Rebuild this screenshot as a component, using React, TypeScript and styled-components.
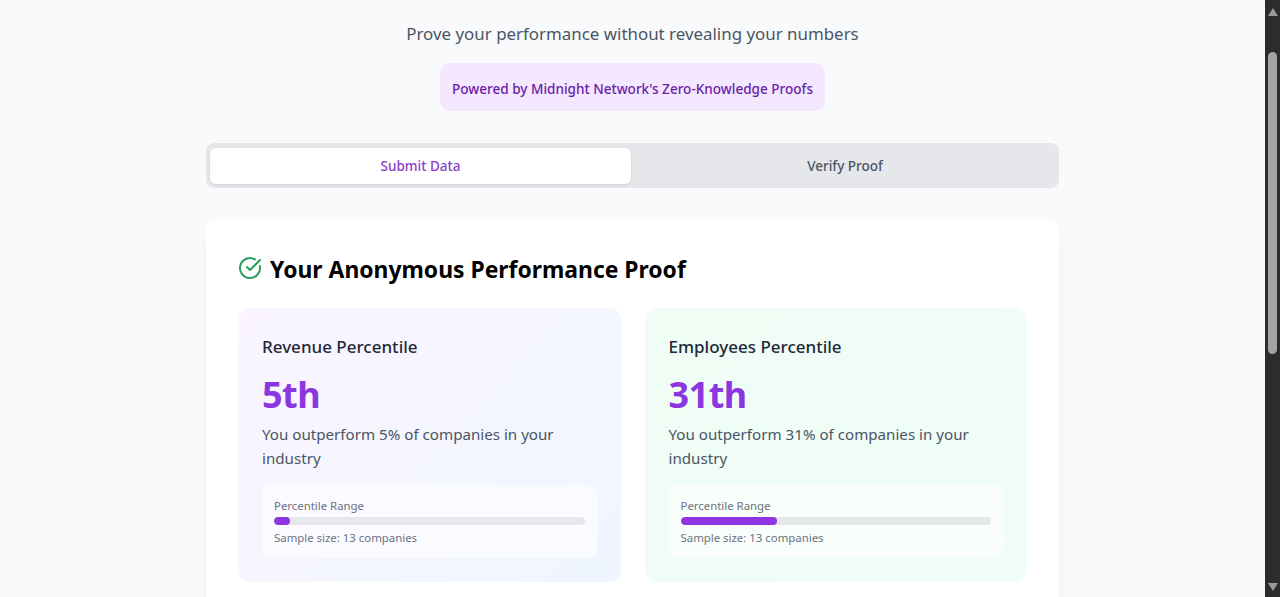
import React from 'react';
import styled, { createGlobalStyle } from 'styled-components';

const GlobalStyle = createGlobalStyle`
  html, body {
    margin: 0;
    padding: 0;
    height: 100%;
    overflow: hidden;
    background: #f9fafb;
    font-family: "Noto Sans", "Open Sans", sans-serif;
  }
`;

const Shell = styled.div`
  display: flex;
  height: 597px;
  overflow: hidden;
`;

const Main = styled.main`
  flex: 1;
  min-width: 0;
  overflow: hidden;
  background: #f9fafb;
  display: flex;
  flex-direction: column;
  align-items: center;
`;

const Header = styled.header`
  display: flex;
  flex-direction: column;
  align-items: center;
  padding-top: 21px;
`;

const Subtitle = styled.p`
  margin: 0;
  font-size: 16.9px;
  line-height: 26px;
  color: #4b5563;
`;

const Badge = styled.div`
  margin-top: 16px;
  height: 48px;
  box-sizing: border-box;
  padding: 3px 12px 0;
  display: flex;
  align-items: center;
  background: #f3e8ff;
  border-radius: 10px;
  color: #6b21a8;
  font-size: 13.55px;
  font-weight: 500;
`;

const Content = styled.div`
  width: 853px;
  margin-top: 32px;
`;

const Tabs = styled.div`
  display: grid;
  grid-template-columns: 421px 1fr;
  height: 45px;
  box-sizing: border-box;
  padding: 5px 0 4px 4px;
  background: #e5e7eb;
  border-radius: 8px;
`;

const Tab = styled.button<{ $active?: boolean }>`
  border: 0;
  border-radius: 6px;
  font-family: inherit;
  font-size: 13.5px;
  font-weight: 500;
  background: ${p => (p.$active ? '#ffffff' : 'transparent')};
  color: ${p => (p.$active ? '#8b3dc8' : '#4b5563')};
  box-shadow: ${p => (p.$active ? '0 1px 3px rgba(0,0,0,0.1)' : 'none')};
`;

const Panel = styled.section`
  margin-top: 32px;
  padding: 32px;
  height: 420px;
  box-sizing: border-box;
  background: #ffffff;
  border-radius: 12px;
  box-shadow: 0 10px 15px -3px rgba(0,0,0,0.06), 0 4px 6px -4px rgba(0,0,0,0.06);
`;

const PanelTitle = styled.h2`
  margin: 0;
  display: flex;
  align-items: center;
  gap: 8px;
  font-size: 22.9px;
  line-height: 36px;
  font-weight: 700;
  color: #000000;

  svg {
    margin-top: -4px;
  }
`;

const CardGrid = styled.div`
  margin-top: 20px;
  display: grid;
  grid-template-columns: 1fr 1fr;
  gap: 24px;
`;

const Card = styled.article<{ $tone: 'purple' | 'green' }>`
  padding: 24px;
  border-radius: 12px;
  background: ${p =>
    p.$tone === 'purple'
      ? 'linear-gradient(135deg, #faf5ff, #eff6ff)'
      : 'linear-gradient(135deg, #effdf5, #f0fdf9)'};
`;

const CardTitle = styled.h3`
  margin: 0;
  font-size: 17px;
  line-height: 30px;
  font-weight: 500;
  color: #1f2937;
`;

const Value = styled.div`
  margin-top: 13px;
  font-size: 36px;
  line-height: 40px;
  font-weight: 700;
  letter-spacing: -0.5px;
  color: #8b36de;
`;

const Description = styled.p`
  margin: 7px 0 0;
  font-size: 15.15px;
  line-height: 24px;
  color: #4b5563;
`;

const RangeBox = styled.div`
  margin-top: 15px;
  padding: 13px 12px 12px;
  background: rgba(255, 255, 255, 0.6);
  border-radius: 8px;
`;

const RangeText = styled.div`
  font-size: 11.4px;
  line-height: 16px;
  color: #6b7280;
`;

const Track = styled.div`
  height: 8px;
  margin: 3px 0 5px;
  background: #e5e7eb;
  border-radius: 999px;
  overflow: hidden;
`;

const Fill = styled.div`
  height: 100%;
  background: #8b36de;
  border-radius: 999px;
`;

const ScrollBar = styled.div`
  width: 15px;
  flex: none;
  background: #2c2c2c;
  display: flex;
  flex-direction: column;
  align-items: center;
`;

const ScrollArrow = styled.div<{ $down?: boolean }>`
  flex: none;
  margin: ${p => (p.$down ? '0 0 6px' : '8px 0 0')};
  width: 0;
  height: 0;
  border-left: 5px solid transparent;
  border-right: 5px solid transparent;
  ${p => (p.$down ? 'border-top: 8px solid #9a9a9a;' : 'border-bottom: 8px solid #9a9a9a;')}
`;

const ScrollThumb = styled.div`
  width: 9px;
  height: 302px;
  margin-top: 36px;
  background: #a3a3a3;
  border-radius: 5px;
`;

const ScrollSpacer = styled.div`
  flex: 1;
`;

const CheckIcon = () => (
  <svg width="24" height="24" viewBox="0 0 24 24" fill="none" stroke="#2a9d5c" strokeWidth="2" strokeLinecap="round" strokeLinejoin="round">
    <path d="M21.8 10A10 10 0 1 1 17 3.34" />
    <path d="m9 11 3 3L22 4" />
  </svg>
);

const metrics = [
  { title: 'Revenue Percentile', percentile: 5, tone: 'purple' as const },
  { title: 'Employees Percentile', percentile: 31, tone: 'green' as const },
];

export default function App() {
  return (
    <Shell>
      <GlobalStyle />
      <Main>
        <Header>
          <Subtitle>Prove your performance without revealing your numbers</Subtitle>
          <Badge>Powered by Midnight Network's Zero-Knowledge Proofs</Badge>
        </Header>
        <Content>
          <Tabs>
            <Tab $active>Submit Data</Tab>
            <Tab>Verify Proof</Tab>
          </Tabs>
          <Panel>
            <PanelTitle>
              <CheckIcon />
              Your Anonymous Performance Proof
            </PanelTitle>
            <CardGrid>
              {metrics.map(m => (
                <Card key={m.title} $tone={m.tone}>
                  <CardTitle>{m.title}</CardTitle>
                  <Value>{`${m.percentile}th`}</Value>
                  <Description>{`You outperform ${m.percentile}% of companies in your industry`}</Description>
                  <RangeBox>
                    <RangeText>Percentile Range</RangeText>
                    <Track>
                      <Fill style={{ width: `${m.percentile}%` }} />
                    </Track>
                    <RangeText>Sample size: 13 companies</RangeText>
                  </RangeBox>
                </Card>
              ))}
            </CardGrid>
          </Panel>
        </Content>
      </Main>
      <ScrollBar>
        <ScrollArrow />
        <ScrollThumb />
        <ScrollSpacer />
        <ScrollArrow $down />
      </ScrollBar>
    </Shell>
  );
}
